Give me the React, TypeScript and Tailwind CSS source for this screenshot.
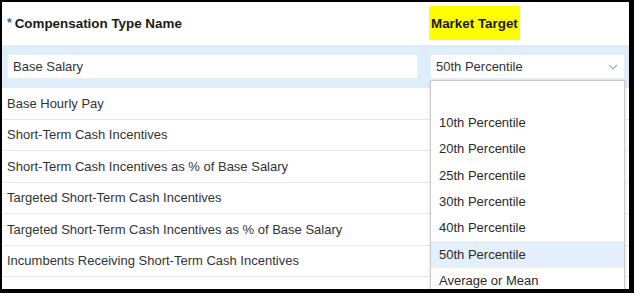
import React from 'react';

const rows = [
    'Base Hourly Pay',
    'Short-Term Cash Incentives',
    'Short-Term Cash Incentives as % of Base Salary',
    'Targeted Short-Term Cash Incentives',
    'Targeted Short-Term Cash Incentives as % of Base Salary',
    'Incumbents Receiving Short-Term Cash Incentives',
];

const options = [
    '',
    '10th Percentile',
    '20th Percentile',
    '25th Percentile',
    '30th Percentile',
    '40th Percentile',
    '50th Percentile',
    'Average or Mean',
];

const App: React.FC = () => {
    return (
        <div className="w-[634px] h-[293px] bg-black pt-[2px] pl-[2px] pr-[5px] pb-[4px] font-['Liberation_Sans',Arial,sans-serif]">
            <div className="relative w-full h-full bg-white overflow-hidden text-[13px]">
                {/* header */}
                <div className="flex h-[43px] pt-[2px] items-center">
                    <div className="w-[427px] flex items-center pl-[5px] font-bold text-[13.4px] text-[#1a1a1a]">
                        <span className="text-[#1a6fc9] mr-[3px] -mt-[3px] text-[12px]">*</span>
                        <span>Compensation Type Name</span>
                    </div>
                    <div className="flex items-center h-[34px] -mt-[4px] pt-[3px] px-[2px] bg-[#ffff00] font-bold text-[13.4px] text-[#1a1a1a]">
                        Market Target
                    </div>
                </div>

                {/* selected row */}
                <div className="flex items-center h-[43px] bg-[#deedfa] pl-[5px] pr-[4px] gap-[12px]">
                    <div className="w-[411px] h-[25px] bg-white border border-[#e6eef6] flex items-center pl-[5px] text-[#333]">
                        Base Salary
                    </div>
                    <div className="flex-1 h-[25px] bg-white border border-[#e6eef6] flex items-center justify-between pl-[5px] pr-[6px] text-[#333]">
                        <span>50th Percentile</span>
                        <svg width="10" height="6" viewBox="0 0 10 6" fill="none">
                            <path d="M1 1l4 4 4-4" stroke="#a8a8a8" strokeWidth="1.2" />
                        </svg>
                    </div>
                </div>

                {/* list rows */}
                <div className="flex flex-col">
                    {rows.map((r) => (
                        <div
                            key={r}
                            className="h-[31.5px] flex items-center pl-[5px] border-b border-[#e8e8e8] text-[#333]"
                        >
                            {r}
                        </div>
                    ))}
                </div>

                {/* open dropdown */}
                <div className="absolute left-[428px] top-[78px] w-[195px] pt-[2px] bg-white border border-[#c9c9c9] shadow-[0_2px_4px_rgba(0,0,0,0.12)] text-[#2a2a2a]">
                    {options.map((o, i) => (
                        <div
                            key={i}
                            className={
                                'h-[26.4px] flex items-center pl-[8px] ' +
                                (o === '50th Percentile' ? 'bg-[#e3effa]' : '')
                            }
                        >
                            {o}
                        </div>
                    ))}
                </div>
            </div>
        </div>
    );
};

export default App;
